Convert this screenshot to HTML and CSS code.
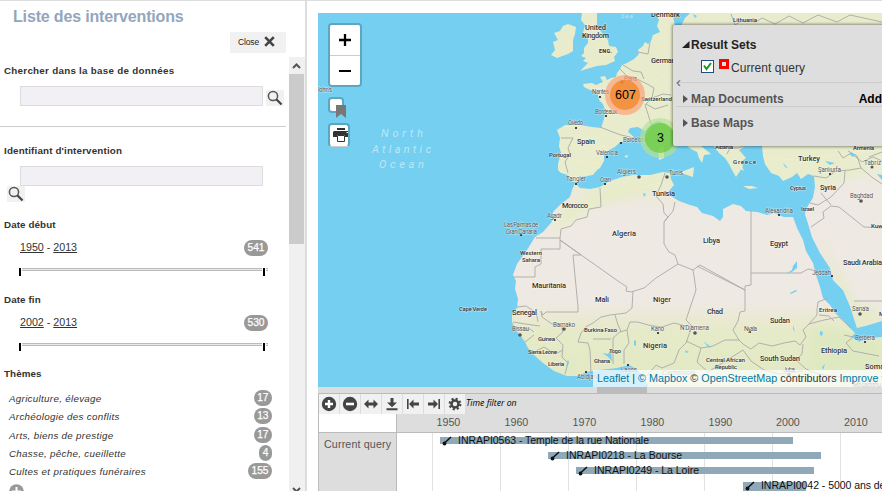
FILE: index.html
```html
<!DOCTYPE html>
<html lang="fr">
<head>
<meta charset="utf-8">
<title>Liste des interventions</title>
<link rel="stylesheet" href="styles.css">
</head>
<body>
<svg class="defs" width="0" height="0">
  <symbol id="search" viewBox="0 0 18 16"><circle cx="7" cy="6" r="4.600" fill="none" stroke="#555" stroke-width="1.500"/><path d="M10.3 9.3L15.5 14.5" stroke="#444" stroke-width="2.200"/></symbol>
</svg>
<div class="app">
  <aside class="sidebar">
    <h1>Liste des interventions</h1>
    <button class="close"><span>Close</span><svg width="11" height="11" viewBox="0 0 11 11"><path d="M1.2 1.2L9.8 9.8M9.8 1.2L1.2 9.8" stroke="#444" stroke-width="2.6"/></svg></button>
    <div class="scroller">
      <div class="facets">
        <section class="facet query">
          <h2>Chercher dans la base de données</h2>
          <div class="field-row"><div class="field"></div><svg class="search" width="18" height="16"><use href="#search"/></svg></div>
        </section>
        <section class="facet ident">
          <h2>Identifiant d'intervention</h2>
          <div class="field"></div>
          <svg class="search" width="18" height="16"><use href="#search"/></svg>
        </section>
        <section class="facet range">
          <h2>Date début</h2>
          <div class="values"><p><u>1950</u> - <u>2013</u></p><b class="count">541</b></div>
          <div class="slider"><i></i><i></i></div>
        </section>
        <section class="facet range">
          <h2>Date fin</h2>
          <div class="values"><p><u>2002</u> - <u>2013</u></p><b class="count">530</b></div>
          <div class="slider"><i></i><i></i></div>
        </section>
        <section class="facet themes">
          <h2>Thèmes</h2>
          <ul>
            <li><em>Agriculture, élevage</em><b class="count">17</b></li>
            <li><em>Archéologie des conflits</em><b class="count">13</b></li>
            <li><em>Arts, biens de prestige</em><b class="count">17</b></li>
            <li><em>Chasse, pêche, cueillette</em><b class="count">4</b></li>
            <li><em>Cultes et pratiques funéraires</em><b class="count">155</b></li>
          </ul>
          <svg class="more" width="15" height="15" viewBox="0 0 15 15"><circle cx="7.5" cy="7.5" r="7.3" fill="#999"/><path d="M7.5 3v9M3 7.5h9" stroke="#fff" stroke-width="2"/></svg>
        </section>
      </div>
      <div class="scrollbar">
        <svg width="15" height="17" viewBox="0 0 15 17"><path d="M4 11L7.5 7.5L11 11" fill="none" stroke="#555" stroke-width="2"/></svg>
        <div class="thumb"></div>
        <svg class="down" width="15" height="6" viewBox="0 0 15 6"><path d="M4 3L7.5 6.5L11 3" fill="none" stroke="#555" stroke-width="2"/></svg>
      </div>
    </div>
  </aside>

  <main class="main">
    <div class="map">
      <svg class="world" width="564" height="374" viewBox="318 13 564 374">
        <defs>
          <linearGradient id="ground" gradientUnits="userSpaceOnUse" x1="0" y1="13" x2="0" y2="387">
            <stop offset="0" stop-color="#e8ebcc"/><stop offset=".44" stop-color="#e8edcd"/><stop offset=".49" stop-color="#ece9da"/><stop offset=".53" stop-color="#efe9e3"/><stop offset=".77" stop-color="#efe9e3"/><stop offset=".85" stop-color="#e6eac8"/><stop offset="1" stop-color="#e1e9c3"/>
          </linearGradient>
          <filter id="soft" x="-20%" y="-20%" width="140%" height="140%"><feGaussianBlur stdDeviation="5"/></filter>
          <clipPath id="land"><use href="#europe"/><use href="#africa"/></clipPath>
        </defs>
        <rect x="318" y="13" width="564" height="374" fill="#75cff0"/>
        <g fill="url(#ground)">
          <path id="europe" d="M655 13L659 20L657 26L660 32L653 35L651 41L648 44L645 42L643 46L638 50L639 54L634 59L627 63L622 65L620 69L617 73L616 77L611 78L607 80L605 76L600 77L603 82L596 85L592 83L583 84L584 87L590 90L595 91L598 95L599 100L603 104L605 110L604 119L601 128L592 127L580 125L565 125L557 130L560 138L559 146L561 153L558 164L558 170L561 173L568 175L571 181L576 182L581 177L593 175L597 170L600 168L604 161L604 155L609 150L615 147L620 142L629 141L634 137L628 132L630 128L638 127L645 131L651 124L658 121L666 124L675 135L683 143L691 149L697 152L699 158L702 163L704 155L711 154L706 150L700 145L690 135L700 133L712 144L719 153L725 158L729 164L732 170L736 177L740 171L743 166L741 162L746 158L739 150L747 145L762 146L763 156L765 164L771 173L779 176L783 181L792 177L797 173L801 179L808 174L814 176L815 187L813 198L808 206L805 214L808 223L812 237L820 253L826 262L830 268L833 280L843 290L850 306L854 319L857 328L869 325L882 321V13H690L685 18L681 26L675 25L672 13Z"/>
          <path id="africa" d="M575 183L580 188L590 189L600 187L610 181L622 177L633 175L650 175L663 172L670 173L671 179L674 185L669 191L671 196L679 201L690 205L697 207L702 213L713 216L720 221L723 217L723 209L733 204L741 206L746 211L757 212L767 215L774 213L784 217L793 217L797 228L803 240L806 251L813 263L816 275L820 287L823 298L830 305L836 314L843 320L848 326L855 333L851 337L859 342L870 338L882 337V387H649L643 377L637 369L629 365L617 368L600 370L587 372L577 376L567 376L554 371L543 363L534 355L528 348L525 342L520 335L516 330L512 322L512 314L517 308L518 299L515 289L516 281L513 275L517 264L527 250L535 237L543 232L551 223L553 219L553 212L561 204L570 197L572 190Z"/>
          <path d="M582 13L581 20L585 25L583 33L588 37L588 43L584 48L584 53L581 56L586 58L583 61L588 63L580 71L590 68L597 66L606 65L615 61L614 57L618 52L616 47L609 46L608 40L602 33L597 26L597 13Z"/>
          <path d="M563 26L568 24L576 27L575 34L573 40L573 51L568 54L557 58L551 55L555 50L553 42L558 40L554 33L560 31Z"/>
          <path d="M681 172L694 167L693 177L684 174ZM658 149L664 146L664 158L659 160ZM743 186L752 186L758 188L749 189ZM791 190L799 186L797 191ZM663 13h4l1 10l-5 2zM624 156l4-1l-1 3zM737 167l4-3l3 7z"/>
        </g>
        <g clip-path="url(#land)">
          <g filter="url(#soft)">
            <path d="M561 212L580 201L602 190L656 181L669 184L643 190L616 199L593 206L575 219L550 233Z" fill="#e6edc4"/>
            <path d="M790 199L882 170V306L865 306L847 286L824 245L800 225Z" fill="#efe9e3"/>
            <path d="M817 230L858 306L882 309L862 324L840 290Z" fill="#e5eac5"/>
            <path d="M809 324L882 337V387H811Z" fill="#dfe9c1"/>
          </g>
          <g fill="none" stroke="#f5efc4" stroke-width="1" opacity=".75"><path d="M565 142L590 150L605 145M572 160L600 163M625 73L648 86L665 75M620 106L634 122M660 183L632 190M760 158L802 160L865 151M828 80L882 30M845 155L875 168"/></g>
        </g>
        <g fill="none" stroke="#aaa9a9" stroke-width=".9">
          <path d="M561 138L573 138L568 148L570 154L565 162L568 173M600 127L610 131L621 135L634 138M620 69L628 77L637 79L649 85L654 88L652 98L645 105L648 114L651 124M623 65L633 71L641 72L644 79M638 52L648 54L650 42M652 98L663 94L671 95M646 104L655 109L668 105"/>
          <path d="M731 14L735 25L743 20L756 22L762 18L775 24L789 16L803 23L818 15L837 22L850 15L882 22M747 145L738 148L730 148L727 154M814 176L826 178L836 171L850 170L861 168L857 156L848 151M861 168L873 178L882 184M845 171L844 183L831 197L818 205L810 203M838 151L843 158L851 153L862 162L873 157L882 161M831 206L839 207L864 227L882 228M831 206L823 212L824 218L811 227M821 193L831 205"/>
          <path d="M600 188L601 207L589 209L587 217L576 220L571 226L561 229L560 238H536M560 238V249H541V264L535 267V277H513M560 240L618 281L627 287L626 291L631 292L644 288L656 278L678 264M581 255H573L578 307L578 312L546 312L543 315L541 311M581 255L560 240M665 173L661 185L656 196L663 204L664 213L668 217L664 222L664 244L669 252L675 255L678 264L693 270L694 276L696 290L686 320L692 326L686 343L679 350L674 363L662 368L656 365L647 376M664 222L673 211L675 202M697 266L745 290V286L751 285V210M751 273H801L808 269L817 271M693 270L700 265L745 290V311L740 312L738 321L733 330L739 340L743 344L751 349L759 343L772 346L784 343L795 341L800 345L806 337L803 330L809 324L817 315L817 309L818 302L828 298"/>
          <path d="M633 291L632 308L626 313L610 315L601 317L593 323L587 326L581 333L578 342L588 343L590 350L591 374M615 315L618 325L621 331L613 338L613 364M593 339L611 339M620 332L627 330L630 322L638 322L648 325L662 327L674 323L686 326M627 330L629 343L624 350L624 364M541 311L542 317L552 324L561 325L563 332L556 338L563 345L562 357L568 363L565 374M517 307L526 306L532 310L537 316L538 322M513 322L532 325L540 326M516 329L530 329L534 332M525 342L534 335M536 351L544 347L555 354L563 350M686 341L701 348L713 346L725 340L739 340M701 348L697 362L708 372L724 362L743 350M743 350L751 361L764 370L780 374L803 371M803 344L802 354L796 360L806 369L818 374L840 377M809 324L824 320L839 317L851 328M844 335L853 337L846 343L853 351L879 356M819 315L829 316L834 321M854 301L882 301M869 157L882 152"/>
        </g>
        <g fill="#75cff0"><path d="M786 274l6-4l1-4l4-5v7l-5 4zM790 293l6-3l1 1l-6 3zM820 331l3 1l-1 4l-2-1zM602 353l6 1l3-5l1 12l-5-5zM634 341l2-1v6l-2-1zM703 341l8 6l-2 1zM685 350l4 2l-3 1zM822 367l3-3l-2 6zM783 163l5 5l-3-1zM849 154l7 0l-3 3zM825 161l10 2l-5 2zM693 14l4 2l-2 2zM643 193l3 1l-2 3zM793 325l2 7l-2-3zM568 359l1 4l-3 4zM877 174l5 1v5z"/></g>
        <g fill="#555"><circle cx="639" cy="177" r="1.8"/><circle cx="667" cy="177" r="1.8"/><circle cx="520" cy="335" r="1.8"/><circle cx="564" cy="329" r="1.8"/><circle cx="695" cy="333" r="1.8"/><circle cx="861" cy="201" r="1.8"/><circle cx="860" cy="314" r="1.8"/><circle cx="789" cy="375" r="1.8"/><circle cx="622" cy="82" r="1.8"/><circle cx="872" cy="167" r="1.5"/></g>
        <g fill="#111"><circle cx="600" cy="97" r="1"/><circle cx="606" cy="116" r="1"/><circle cx="576" cy="128" r="1"/><circle cx="621" cy="143" r="1"/><circle cx="607" cy="157" r="1"/><circle cx="576" cy="184" r="1"/><circle cx="605" cy="184" r="1"/><circle cx="555" cy="220" r="1"/><circle cx="521" cy="235" r="1"/><circle cx="779" cy="215" r="1"/><circle cx="658" cy="333" r="1"/><circle cx="628" cy="365" r="1"/><circle cx="586" cy="372" r="1"/><circle cx="750" cy="332" r="1"/><circle cx="832" cy="276" r="1"/><circle cx="865" cy="342" r="1"/><circle cx="830" cy="174" r="1"/></g>
        <g class="ocean"><text x="381" y="137" textLength="42">North</text><text x="372" y="153" textLength="59">Atlantic</text><text x="379" y="168" textLength="45">Ocean</text><text class="sea" x="621" y="18" textLength="12">Sea</text></g>
        <g class="country">
          <text x="585" y="30" textLength="21">United</text><text x="582" y="38" textLength="27">Kingdom</text><text class="eng" x="599" y="53" textLength="13">ENG.</text>
          <text x="651" y="17" textLength="29">Denmark</text><text x="651" y="63" textLength="28">Germany</text><text class="sm" x="641" y="101" textLength="31">Switzerland</text><text x="577" y="144" textLength="18">Spain</text><text class="sm" x="549" y="157" textLength="22">Portugal</text><text x="652" y="196" textLength="23">Tunisia</text><text class="sm" x="733" y="22" textLength="24">Lithuania</text>
          <text x="562" y="208" textLength="26">Morocco</text><text x="612" y="236" textLength="24">Algeria</text><text class="sm" x="520" y="255" textLength="22">Western</text><text class="sm" x="522" y="262" textLength="18">Sahara</text><text x="532" y="288" textLength="34">Mauritania</text><text x="595" y="302" textLength="14">Mali</text><text x="653" y="302" textLength="18">Niger</text><text x="703" y="243" textLength="17">Libya</text><text x="770" y="246" textLength="18">Egypt</text><text x="843" y="265" textLength="39">Saudi Arabia</text><text x="512" y="315" textLength="25">Senegal</text><text class="sm" x="538" y="341" textLength="17">Guinea</text><text class="sm" x="584" y="332" textLength="33">Burkina Faso</text><text class="sm" x="528" y="354" textLength="29">Sierra Leone</text><text class="sm" x="548" y="366" textLength="16">Liberia</text><text class="sm" x="594" y="363" textLength="16">Ghana</text><text class="sm" x="609" y="353" textLength="12">Togo</text><text x="643" y="348" textLength="24">Nigeria</text><text x="707" y="314" textLength="16">Chad</text><text x="770" y="323" textLength="20">Sudan</text><text x="760" y="361" textLength="40">South Sudan</text><text x="821" y="353" textLength="26">Ethiopia</text><text class="sm" x="819" y="312" textLength="18">Eritrea</text><text x="865" y="369" textLength="27">Somalia</text><text class="sm" x="706" y="362" textLength="39">Central African</text><text class="sm" x="715" y="368.500" textLength="22">Republic</text><text class="lite" x="662" y="375" textLength="33">Cameroon</text>
          <text class="sm" x="733" y="164" textLength="23">Greece</text><text x="798" y="161" textLength="22">Turkey</text><text class="sm" x="790" y="190" textLength="16">Cyprus</text><text x="820" y="190" textLength="16">Syria</text><text class="sm" x="801" y="211" textLength="13">Israel</text><text class="sm" x="871" y="228" textLength="18">Kuwait</text><text class="sm" x="853" y="150" textLength="21">Armenia</text><text class="sm" x="715" y="149" textLength="18">Albania</text><text class="sm" x="459" y="311" textLength="28">Cape Verde</text><text class="sm" x="879" y="316">M</text>
        </g>
        <g class="city"><text x="316" y="92" textLength="16">John's</text><text x="624" y="81" textLength="13">Paris</text><text x="592" y="94" textLength="17">Nantes</text><text x="595" y="114" textLength="22">Bordeaux</text><text x="568" y="125" textLength="15">Oviedo</text><text x="623" y="142" textLength="25">Barcelona</text><text x="596" y="155" textLength="22">Valencia</text><text x="617" y="174" textLength="19">Algiers</text><text x="669" y="175" textLength="14">Tunis</text><text x="566" y="181" textLength="20">Tangier</text><text x="600" y="182" textLength="11">Oran</text><text x="547" y="218" textLength="15">Agadir</text><text x="504" y="227" textLength="34">Las Palmas de</text><text x="506" y="233.500" textLength="31">Gran Canaria</text><text x="765" y="213" textLength="28">Alexandria</text><text x="850" y="198" textLength="23">Baghdad</text><text x="818" y="172" textLength="23">Şanlıurfa</text><text x="864" y="165" textLength="17">Tabriz</text><text x="812" y="275" textLength="19">Jeddah</text><text x="852" y="311" textLength="17">Sana'a</text><text x="855" y="340" textLength="20">Berbera</text><text x="744" y="331" textLength="13">Nyala</text><text x="680" y="330" textLength="29">N'Djamena</text><text x="651" y="331" textLength="13">Kano</text><text x="512" y="331" textLength="17">Bissau</text><text x="553" y="327" textLength="22">Bamako</text><text x="577" y="379" textLength="20">Abidjan</text><text x="621" y="372" textLength="16">Lagos</text><text x="783" y="372" textLength="12">Juba</text><text x="853" y="387" textLength="28">Mogadishu</text></g>
        <g class="cluster"><circle cx="625" cy="95" r="20" fill="#fd9c73" fill-opacity=".65"/><circle cx="625" cy="95" r="15" fill="#f18017" fill-opacity=".65"/><text x="625.500" y="99">607</text><circle cx="660" cy="138" r="20" fill="#b5e28c" fill-opacity=".65"/><circle cx="660" cy="138" r="15" fill="#6ecc39" fill-opacity=".75"/><text x="660.500" y="142">3</text></g>
      </svg>
      <div class="controls">
        <div class="zoom"><button><svg width="14" height="14"><path d="M7 1v12M1 7h12" stroke="#000" stroke-width="2.3"/></svg></button><button><svg width="14" height="14"><path d="M1 7h12" stroke="#000" stroke-width="2"/></svg></button></div>
        <div class="bookmark"><svg width="10" height="13"><path d="M0 0h10v13L5 9L0 13Z" fill="#777"/></svg></div>
        <div class="print"><svg width="16" height="15" viewBox="0 0 16 15"><path d="M4 0h8v2H4zM1 3h14v6h-3V7H4v2H0V4z" fill="#333"/><path d="M4.500 7.500h7v6h-7z" fill="#fff" stroke="#333"/><path d="M13.500 4h1.500v1h-1.500z" fill="#fff"/></svg></div>
      </div>
      <div class="layers">
        <div class="collapse">‹</div>
        <div class="group open"><svg width="8" height="8"><path d="M7.5 0v7H0Z" fill="#222"/></svg><strong>Result Sets</strong></div>
        <div class="layer"><span class="check"><svg width="9" height="9"><path d="M1 3.500L3.500 7L8 1" fill="none" stroke="#199b19" stroke-width="2"/></svg></span><span class="swatch"></span><span class="name">Current query</span></div>
        <div class="group docs"><svg width="8" height="8"><path d="M1 0v8L6 4Z" fill="#555"/></svg><strong>Map Documents</strong><b>Add</b></div>
        <div class="group base"><svg width="8" height="8"><path d="M1 0v8L6 4Z" fill="#555"/></svg><strong>Base Maps</strong></div>
      </div>
      <div class="attribution"><a>Leaflet</a> | <a>© Mapbox</a> © <a>OpenStreetMap</a> contributors <a>Improve this map</a></div>
    </div>
    <div class="splitter"><i></i></div>
    <div class="timeline">
      <div class="tools">
        <button><svg width="16" height="16" viewBox="0 0 16 16"><circle cx="8" cy="8" r="7.2" fill="#444"/><path d="M8 4v8M4 8h8" stroke="#fff" stroke-width="2.4"/></svg></button>
        <button><svg width="16" height="16" viewBox="0 0 16 16"><circle cx="8" cy="8" r="7.2" fill="#444"/><path d="M4 8h8" stroke="#fff" stroke-width="2.6"/></svg></button>
        <button><svg width="14" height="16" viewBox="0 0 14 16"><path d="M0 8L4.500 3.500v3h5v-3L14 8l-4.500 4.500v-3h-5v3Z" fill="#444"/></svg></button>
        <button><svg width="14" height="16" viewBox="0 0 14 16"><path d="M5.5 2h3v4.500H12L7 11.300L2 6.500h3.500zM1.500 12.200h11v2h-11z" fill="#444"/></svg></button>
        <button><svg width="14" height="16" viewBox="0 0 14 16"><path d="M1 3h1.600v10H1zM3 8L7.500 3.500v3H13v3H7.500v3Z" fill="#444"/></svg></button>
        <button><svg width="14" height="16" viewBox="0 0 14 16"><path d="M11.400 3H13v10h-1.600zM11 8L6.500 3.500v3H1v3h5.500v3Z" fill="#444"/></svg></button>
        <button><svg width="14" height="16" viewBox="0 0 14 16"><circle cx="7" cy="8" r="5.300" fill="none" stroke="#444" stroke-width="2.200" stroke-dasharray="2.080 2.080"/><circle cx="7" cy="8" r="3.500" fill="none" stroke="#444" stroke-width="2.500"/></svg></button>
        <em>Time filter on</em>
      </div>
      <svg class="chart" width="564" height="77" viewBox="318 414 564 77">
        <path d="M319 414h77v18h-77z" fill="#fff"/><path d="M396 433h486v58H396z" fill="#fff"/>
        <path d="M396.500 414v77M319 432.500h563" stroke="#bbb"/>
        <path d="M432.500 433v58M500.500 433v58M568.500 433v58M636.500 433v58M704.500 433v58M772.500 433v58M840.500 433v58" stroke="#e2e2e2"/>
        <g class="years"><text x="436.500" y="426">1950</text><text x="504.500" y="426">1960</text><text x="572.500" y="426">1970</text><text x="640.500" y="426">1980</text><text x="708.500" y="426">1990</text><text x="776" y="426">2000</text><text x="844" y="426">2010</text><text x="324" y="448" textLength="67">Current query</text></g>
        <g fill="#8fa9b8"><path d="M440 437h353v7H440zM548 452h273v7H548zM576 467h238v7H576zM743 482h63v9h-63z"/></g>
        <g><g id="mark"><path d="M444 443.500L451 437" stroke="#111" stroke-width="1.600"/><circle cx="444.500" cy="443.500" r="1.900" fill="#111"/></g><use href="#mark" x="108" y="15"/><use href="#mark" x="136" y="30"/><use href="#mark" x="303" y="45"/></g>
        <g class="events"><text x="458" y="444" textLength="191">INRAPI0563 - Temple de la rue Nationale</text><text x="566" y="459" textLength="116">INRAPI0218 - La Bourse</text><text x="594" y="474" textLength="105">INRAPI0249 - La Loire</text><text x="761" y="489" textLength="136">INRAPI0042 - 5000 ans de fo</text></g>
      </svg>
    </div>
  </main>
</div>
</body>
</html>
```
FILE: styles.css
```css
* { box-sizing: border-box; }
body { margin: 0; overflow: hidden; font-family: "Liberation Sans", Arial, sans-serif; color: #333; background: #fff; }
h1, h2, p, ul { margin: 0; padding: 0; font-size: inherit; }
button { border: 0; padding: 0; background: #f1f1f1; font: inherit; display: flex; align-items: center; justify-content: center; }
svg { display: block; flex: none; }
.defs { position: absolute; }
.app { width: 882px; height: 491px; display: flex; overflow: hidden; border-top: 1px solid #ddd; }

.sidebar { width: 307px; flex: none; border-right: 2px solid #ddd; display: flex; flex-direction: column; }
.sidebar h1 { margin: 6px 0 0 13px; height: 25px; font-size: 16px; line-height: 20px; letter-spacing: -.16px; color: #92a6bd; white-space: nowrap; }
.close { align-self: flex-end; margin-right: 19px; width: 56px; height: 21px; gap: 5px; flex: none; font-size: 8.500px; letter-spacing: -.1px; color: #222; padding-right: 3px; padding-bottom: 2px; }
.scroller { margin-top: 4px; flex: 1; min-height: 0; display: flex; overflow: hidden; }
.facets { flex: 1; font-size: 9.500px; }
.facet h2 { margin-left: 4px; height: 14px; line-height: 14px; font-size: 9.800px; white-space: nowrap; letter-spacing: .27px; }
.query { height: 70px; padding-top: 7px; border-bottom: 1px solid #ccc; margin-right: 3px; }
.field-row { display: flex; gap: 3px; margin-top: 8px; align-items: flex-start; }
.field { width: 243px; height: 20px; margin-left: 20px; background: #f2f0f5; border: 1px solid #ddd; flex: none; }
.search { background: #f1f1f1; }
.field-row .search { margin-top: 4px; }
.ident { height: 91px; padding-top: 17px; }
.ident h2 { letter-spacing: .16px; }
.ident .field { margin-top: 8px; }
.ident .search { margin-left: 7px; }
.range { height: 75px; }
.range h2, .themes h2 { letter-spacing: .1px; }
.values { display: flex; justify-content: space-between; margin: 8px 21px 0 20px; height: 16px; font-size: 10.700px; }
.values p { line-height: 14px; }
.count { min-width: 12px; height: 16px; padding: 0 3.500px; border-radius: 8px; background: #999; color: #fff; font: 10.200px/16px "Liberation Sans", Arial, sans-serif; text-align: center; -webkit-text-stroke: .25px #fff; }
.slider { margin: 12px 21px 0 18px; height: 8px; display: flex; justify-content: space-between; padding-right: 2px; background: linear-gradient(#bbb 1px, #e8e8e8 1px 2px, #bbb 2px 3px, transparent 3px); }
.slider i { width: 4px; height: 8px; background: #000; border: solid #fff; border-width: 0 1px; }
.themes ul { list-style: none; margin: 8px 17px 0 9px; }
.themes { margin-top: -1px; }
.themes li { height: 18.250px; display: flex; align-items: center; justify-content: space-between; font-size: 9.800px; letter-spacing: .3px; }
.themes em { padding-top: 1px; }
.themes .count { letter-spacing: 0; }
.more { margin: 4px 0 0 9px; }
.scrollbar { width: 16px; background: #f0f0f0; display: flex; flex-direction: column; }
.thumb { height: 170px; width: 15px; background: #cbcbcb; }
.down { margin-top: auto; }

.main { margin: 12px 0 0 11px; width: 564px; display: flex; flex-direction: column; flex: none; }
.map { position: relative; height: 374px; overflow: hidden; }
.ocean text { font: italic 11px Roboto, sans-serif; fill: #bfe6f6; }
.ocean .sea { font-size: 6px; }
.country text { font: 500 7.500px Roboto, sans-serif; fill: #333; stroke: #fff; stroke-opacity: .5; stroke-width: 1px; paint-order: stroke; }
.country .sm { font-size: 6.200px; }
.country .eng { font-size: 5.500px; font-weight: 800; }
.country .lite { fill: #999; }
.city text { font: 6.300px Roboto, sans-serif; fill: #555; stroke: #fff; stroke-opacity: .5; stroke-width: 1px; paint-order: stroke; }
.cluster text { font: 12.500px "Liberation Sans", Arial, sans-serif; fill: #000; text-anchor: middle; }
.controls { position: absolute; left: 10px; top: 10px; }
.zoom { width: 34px; height: 64px; border: 2px solid #5da6c0; border-radius: 4px; overflow: hidden; }
.zoom button { width: 30px; height: 30px; background: #fff; }
.zoom button:first-child { height: 31px; border-bottom: 1px solid #ccc; }
.bookmark { width: 16px; height: 16px; margin-top: 10px; border: 2px solid #5da6c0; border-radius: 4px; background: #fff; }
.bookmark svg { margin: 6px 0 0 6px; }
.print { width: 22px; height: 24px; margin-top: 10px; border: 2px solid #5da6c0; border-bottom: 1px solid #ccc; border-radius: 4px; background: #fff; padding: 3px 0 0 3px; }
.layers { position: absolute; left: 355px; top: 12px; width: 215px; height: 121px; background: #dedede; border-radius: 2px; box-shadow: 0 0 3px 1px rgba(0,0,0,.4); font-size: 12px; padding: 12px 6px 0 9px; }
.collapse { position: absolute; left: 3px; top: 48px; font-size: 15px; line-height: 18px; color: #666; }
.group { display: flex; align-items: center; gap: 1px; height: 15px; color: #555; white-space: nowrap; }
.open { color: #222; }
.layer { display: flex; height: 30px; margin-left: 19px; padding-top: 8px; line-height: 15px; }
.check { width: 13px; height: 13px; background: #fff; border: 1px solid #1c4f80; padding: 1px; }
.swatch { width: 10px; height: 10px; border: 3px solid #f00; background: #ddd; margin: -1px 2px 0 5px; }
.name { padding-top: 1px; letter-spacing: .06px; }
.docs { border-top: 1px solid #ccc; border-bottom: 1px solid #ccc; height: 25px; margin-left: -6px; padding: 8px 0 0 6px; }
.docs b { margin-left: auto; color: #000; }
.base { margin-top: 8px; }
.attribution { position: absolute; left: 275px; bottom: 0; width: 320px; height: 17px; padding: 0 4px; line-height: 17px; font-size: 10.770px; white-space: nowrap; background: rgba(255,255,255,.7); }
.attribution a { color: #0078a8; }

.splitter { height: 6px; background: #ddd; }
.splitter i { display: block; width: 50px; height: 6px; margin-left: 279px; background: #bbb; }
.timeline { border: solid #bbb; border-width: 1px 0 0 1px; background: #ddd; }
.tools { height: 20px; display: flex; gap: 1px; }
.tools button { width: 20px; height: 20px; }
.tools em { font: italic 8.700px/18px "Open Sans", sans-serif; color: #000; }
.chart { margin-left: -1px; }
.years text { font-size: 10.700px; fill: #555; }
.events text { font-size: 10.500px; fill: #111; }
```
